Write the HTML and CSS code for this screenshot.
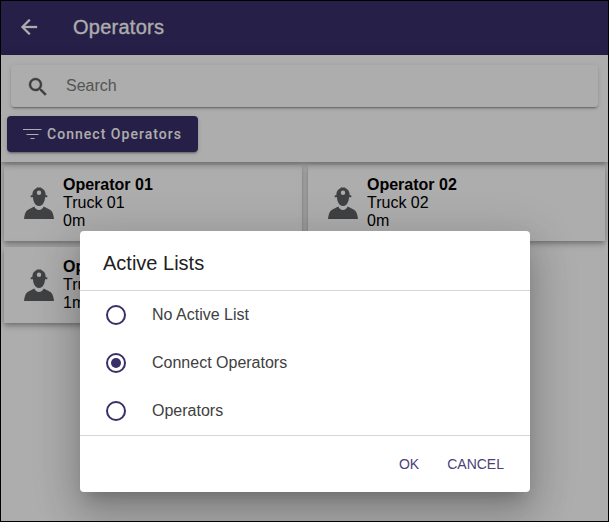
FILE: index.html
```html
<!DOCTYPE html>
<html lang="en">
<head>
<meta charset="utf-8">
<title>Operators</title>
<link rel="stylesheet" href="styles.css">
</head>
<body>
<svg width="0" height="0" class="defs">
  <symbol id="worker" viewBox="0 0 30 32">
    <path fill-rule="evenodd" d="M8.300 8.300C8.300 4.500 9.800 2.300 12 1.400L13 .4H17L18 1.400C20.200 2.300 21.700 4.500 21.700 8.300H23.300V10.200H21C21 13 20 15.500 18.500 17.500Q15 20.700 11.500 17.500C10 15.500 9 13 9 10.200H6.700V8.300ZM15 3.500a2.200 2.200 0 1 0 0 4.400 2.200 2.200 0 0 0 0-4.400Z"/>
    <path d="M0 32C.4 27 1.800 23.700 4 22.700L10.300 19.500C11.200 21.800 12.900 22.900 15 22.900S18.800 21.800 19.700 19.500L26 22.700C28.200 23.700 29.600 27 30 32Z"/>
  </symbol>
</svg>
<div class="app">
  <header class="app-bar">
    <svg class="back" viewBox="0 0 24 24"><path d="M20 11H7.830l5.590-5.590L12 4l-8 8 8 8 1.410-1.410L7.830 13H20v-2z"/></svg>
    <h1>Operators</h1>
  </header>
  <section class="tools">
    <div class="search">
      <svg viewBox="0 0 24 24"><path d="M15.500 14h-.79l-.28-.27A6.471 6.471 0 0 0 16 9.500 6.500 6.500 0 1 0 9.500 16c1.610 0 3.090-.59 4.230-1.570l.27.28v.79l5 4.990L20.490 19l-4.990-5zm-6 0C7.010 14 5 11.990 5 9.500S7.010 5 9.500 5 14 7.010 14 9.500 11.990 14 9.500 14z"/></svg>
      <span>Search</span>
    </div>
    <button class="list-button">
      <svg viewBox="0 0 19 12"><path d="M0 1.500h18.500M3.500 6.500h12M7.500 10.500h4"/></svg>
      <span>Connect Operators</span>
    </button>
  </section>
  <main class="cards">
    <article class="card"><svg><use href="#worker"/></svg><div><b>Operator 01</b><p>Truck 01</p><p>0m</p></div></article>
    <article class="card"><svg><use href="#worker"/></svg><div><b>Operator 02</b><p>Truck 02</p><p>0m</p></div></article>
    <article class="card"><svg><use href="#worker"/></svg><div><b>Operator 03</b><p>Truck 03</p><p>1m</p></div></article>
  </main>
  <div class="scrim">
    <div class="dialog">
      <h2>Active Lists</h2>
      <div class="options">
        <label><i class="radio"></i>No Active List</label>
        <label><i class="radio checked"></i>Connect Operators</label>
        <label><i class="radio"></i>Operators</label>
      </div>
      <footer><button>OK</button><button>CANCEL</button></footer>
    </div>
  </div>
</div>
</body>
</html>
```
FILE: styles.css
```css
* { box-sizing: border-box; margin: 0; }
body { font: 16px/18px "Liberation Sans", Arial, sans-serif; color: #000; }
button { border: 0; background: none; padding: 0; font: inherit; }
.defs { position: absolute; }

.app {
  position: relative;
  display: flex;
  flex-direction: column;
  width: 609px;
  height: 522px;
  border: 1px solid #000;
  background: #fff;
  overflow: hidden;
}

.app-bar {
  display: flex;
  align-items: center;
  height: 54px;
  padding-left: 16px;
  background: #382e6a;
  color: #fff;
}
.back { width: 24px; height: 24px; margin-top: -2px; fill: #fff; stroke: #fff; stroke-width: .3; }
.app-bar h1 {
  margin: -2px 0 0 32px;
  font-size: 20px;
  font-weight: 400;
  line-height: 24px;
  letter-spacing: .25px;
  -webkit-text-stroke: .3px #fff;
}

.tools {
  position: relative;
  z-index: 1;
  height: 107px;
  padding: 10px 10px 0;
  background: #fff;
  box-shadow: 0 2px 4px -1px rgba(0,0,0,.2), 0 4px 5px rgba(0,0,0,.14), 0 1px 10px rgba(0,0,0,.12);
}
.search {
  display: flex;
  align-items: center;
  height: 42px;
  padding-left: 14.500px;
  border-radius: 4px;
  color: #7d7d7d;
  box-shadow: 0 3px 1px -2px rgba(0,0,0,.2), 0 2px 2px rgba(0,0,0,.14), 0 1px 5px rgba(0,0,0,.12);
}
.search svg { width: 24px; height: 24px; margin: 1px 16.500px 0 0; fill: #5a5a5a; stroke: #5a5a5a; stroke-width: .4; }
.list-button {
  display: flex;
  align-items: center;
  width: 191px;
  height: 36px;
  margin: 9px 0 0 -4px;
  padding-left: 16px;
  gap: 5px;
  border-radius: 4px;
  background: #382e6a;
  color: #fff;
  font: 500 14px/18px Roboto, sans-serif;
  letter-spacing: 1.03px;
  white-space: nowrap;
  box-shadow: 0 3px 1px -2px rgba(0,0,0,.2), 0 2px 2px rgba(0,0,0,.14), 0 1px 5px rgba(0,0,0,.12);
}
.list-button svg { width: 19px; height: 12px; fill: none; stroke: #fff; stroke-width: 1.2; }

.cards {
  display: grid;
  grid-template-columns: 298px 297px;
  grid-auto-rows: 76px;
  gap: 6px;
  padding: 3px;
}
.card {
  display: flex;
  align-items: center;
  padding-left: 20px;
  background: #fff;
  box-shadow: 0 2px 4px -1px rgba(0,0,0,.2), 0 4px 5px rgba(0,0,0,.14), 0 1px 10px rgba(0,0,0,.12);
}
.card svg { width: 30px; height: 32px; margin-right: 9px; fill: #5f6164; }

.scrim {
  position: absolute;
  z-index: 2;
  inset: 0;
  padding: 230px 0 0 79px;
  background: rgba(0,0,0,.32);
}
.dialog {
  width: 450px;
  height: 261px;
  border-radius: 4px;
  background: #fff;
  box-shadow: 0 11px 15px -7px rgba(0,0,0,.2), 0 24px 38px 3px rgba(0,0,0,.14), 0 9px 46px 8px rgba(0,0,0,.12);
}
.dialog h2 {
  height: 60px;
  padding: 20px 23px 0;
  border-bottom: 1px solid #d6d6d6;
  color: #212121;
  font-size: 20px;
  font-weight: 400;
  line-height: 24px;
}
.options { height: 145px; border-bottom: 1px solid #d6d6d6; }
.options label {
  display: flex;
  align-items: center;
  height: 48px;
  padding-left: 26px;
  color: #404040;
}
.radio {
  display: grid;
  place-items: center;
  width: 20px;
  height: 20px;
  margin-right: 26px;
  border: 2px solid #382e6a;
  border-radius: 50%;
}
.checked::after { content: ""; width: 10px; height: 10px; border-radius: 50%; background: #382e6a; }
.dialog footer {
  display: flex;
  justify-content: flex-end;
  gap: 28px;
  padding: 19px 26px 0 0;
}
.dialog footer button { color: #4b427a; font-size: 14px; line-height: 18px; }
```
